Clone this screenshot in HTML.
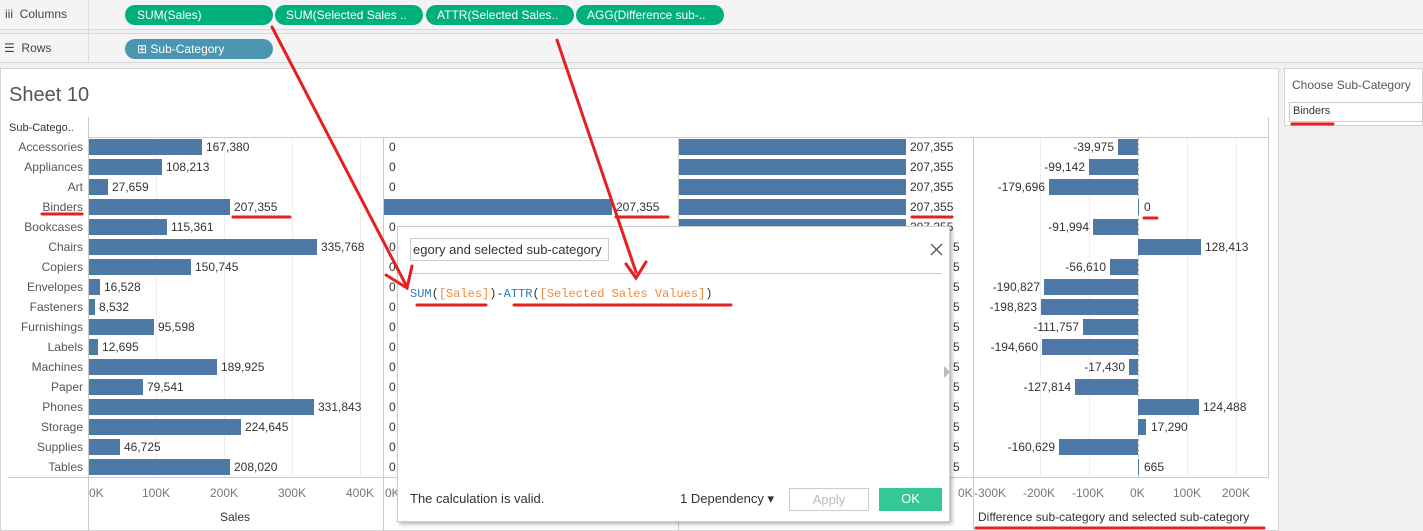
<!DOCTYPE html>
<html><head><meta charset="utf-8"><style>
*{margin:0;padding:0;box-sizing:border-box}
body{width:1423px;height:531px;overflow:hidden;background:#f0f0f0;font-family:"Liberation Sans",sans-serif;font-size:12px;color:#333;position:relative}
.a{position:absolute;white-space:nowrap}
.pill{position:absolute;height:20px;border-radius:10px;color:#fff;font-size:12px;line-height:20px;padding-left:12px;background:#00b07b}
.b{position:absolute;height:16px;background:#4e79a7}
.l{position:absolute;font-size:12px;color:#333;line-height:16px}
.r{position:absolute;font-size:12px;color:#555;line-height:16px;text-align:right;width:75px;left:8px}
.ax{position:absolute;font-size:12px;color:#777;top:486px}
.g{position:absolute;top:120px;height:358px;width:1px;background:#eee}
</style></head><body>
<div class="a" style="left:0;top:0;width:1423px;height:30px;background:#f4f4f4;border-bottom:1px solid #d8d8d8"></div>
<div class="a" style="left:0;top:33px;width:1423px;height:30px;background:#f4f4f4;border-top:1px solid #d8d8d8;border-bottom:1px solid #d8d8d8"></div>
<div class="a" style="left:88px;top:0;width:1px;height:63px;background:#ddd"></div>
<div class="a" style="left:5px;top:7px;font-size:12px;color:#444">iii&nbsp; Columns</div>
<div class="a" style="left:4px;top:41px;font-size:12px;color:#444">☰&nbsp; Rows</div>
<div class="pill" style="left:125px;top:5px;width:148px">SUM(Sales)</div>
<div class="pill" style="left:275px;top:5px;width:148px;padding-left:11px">SUM(Selected Sales ..</div>
<div class="pill" style="left:426px;top:5px;width:148px;padding-left:11px">ATTR(Selected Sales..</div>
<div class="pill" style="left:576px;top:5px;width:148px;padding-left:11px">AGG(Difference sub-..</div>
<div class="pill" style="left:125px;top:39px;width:148px;background:#4a96b0;padding-left:12px">⊞ Sub-Category</div>
<div class="a" style="left:0;top:68px;width:1279px;height:463px;background:#fff;border:1px solid #d4d4d4"></div>
<div class="a" style="left:9px;top:84px;font-size:20px;color:#555">Sheet 10</div>
<div class="a" style="left:1284px;top:68px;width:139px;height:58px;background:#fff;border:1px solid #d4d4d4"></div>
<div class="a" style="left:1292px;top:78px;font-size:12px;color:#555">Choose Sub-Category</div>
<div class="a" style="left:1289px;top:102px;width:134px;height:20px;border:1px solid #ccc;background:#fff"></div>
<div class="a" style="left:1293px;top:105px;font-size:11px;color:#333">Binders</div>
<div class="a" style="left:9px;top:122px;font-size:11px;color:#333">Sub-Catego..</div>
<div class="a" style="left:88px;top:117px;width:1px;height:414px;background:#ccc"></div>
<div class="a" style="left:88px;top:137px;width:1180px;height:1px;background:#ccc"></div>
<div class="a" style="left:8px;top:477px;width:1260px;height:1px;background:#ccc"></div>
<div class="a" style="left:383px;top:137px;width:1px;height:394px;background:#ccc"></div>
<div class="a" style="left:678px;top:137px;width:1px;height:394px;background:#ccc"></div>
<div class="a" style="left:973px;top:137px;width:1px;height:394px;background:#ccc"></div>
<div class="a" style="left:1268px;top:117px;width:1px;height:361px;background:#ccc"></div>
<div class="g" style="left:156px;top:138px;height:339px"></div><div class="g" style="left:224px;top:138px;height:339px"></div><div class="g" style="left:292px;top:138px;height:339px"></div><div class="g" style="left:360px;top:138px;height:339px"></div>
<div class="g" style="left:1040px;top:138px;height:339px"></div><div class="g" style="left:1089px;top:138px;height:339px"></div><div class="g" style="left:1187px;top:138px;height:339px"></div><div class="g" style="left:1236px;top:138px;height:339px"></div>
<div class="a" style="left:1138px;top:138px;height:339px;border-left:1px dashed #bbb"></div>
<div class="r" style="top:139px">Accessories</div><div class="r" style="top:159px">Appliances</div><div class="r" style="top:179px">Art</div><div class="r" style="top:199px">Binders</div><div class="r" style="top:219px">Bookcases</div><div class="r" style="top:239px">Chairs</div><div class="r" style="top:259px">Copiers</div><div class="r" style="top:279px">Envelopes</div><div class="r" style="top:299px">Fasteners</div><div class="r" style="top:319px">Furnishings</div><div class="r" style="top:339px">Labels</div><div class="r" style="top:359px">Machines</div><div class="r" style="top:379px">Paper</div><div class="r" style="top:399px">Phones</div><div class="r" style="top:419px">Storage</div><div class="r" style="top:439px">Supplies</div><div class="r" style="top:459px">Tables</div>
<div class="b" style="left:89px;top:139px;width:113px"></div><div class="l" style="left:206px;top:139px">167,380</div>
<div class="b" style="left:89px;top:159px;width:73px"></div><div class="l" style="left:166px;top:159px">108,213</div>
<div class="b" style="left:89px;top:179px;width:19px"></div><div class="l" style="left:112px;top:179px">27,659</div>
<div class="b" style="left:89px;top:199px;width:141px"></div><div class="l" style="left:234px;top:199px">207,355</div>
<div class="b" style="left:89px;top:219px;width:78px"></div><div class="l" style="left:171px;top:219px">115,361</div>
<div class="b" style="left:89px;top:239px;width:228px"></div><div class="l" style="left:321px;top:239px">335,768</div>
<div class="b" style="left:89px;top:259px;width:102px"></div><div class="l" style="left:195px;top:259px">150,745</div>
<div class="b" style="left:89px;top:279px;width:11px"></div><div class="l" style="left:104px;top:279px">16,528</div>
<div class="b" style="left:89px;top:299px;width:6px"></div><div class="l" style="left:99px;top:299px">8,532</div>
<div class="b" style="left:89px;top:319px;width:65px"></div><div class="l" style="left:158px;top:319px">95,598</div>
<div class="b" style="left:89px;top:339px;width:9px"></div><div class="l" style="left:102px;top:339px">12,695</div>
<div class="b" style="left:89px;top:359px;width:128px"></div><div class="l" style="left:221px;top:359px">189,925</div>
<div class="b" style="left:89px;top:379px;width:54px"></div><div class="l" style="left:147px;top:379px">79,541</div>
<div class="b" style="left:89px;top:399px;width:225px"></div><div class="l" style="left:318px;top:399px">331,843</div>
<div class="b" style="left:89px;top:419px;width:152px"></div><div class="l" style="left:245px;top:419px">224,645</div>
<div class="b" style="left:89px;top:439px;width:31px"></div><div class="l" style="left:124px;top:439px">46,725</div>
<div class="b" style="left:89px;top:459px;width:141px"></div><div class="l" style="left:234px;top:459px">208,020</div>
<div class="l" style="left:389px;top:139px">0</div><div class="l" style="left:389px;top:159px">0</div><div class="l" style="left:389px;top:179px">0</div>
<div class="b" style="left:384px;top:199px;width:228px"></div><div class="l" style="left:616px;top:199px">207,355</div>
<div class="l" style="left:389px;top:219px">0</div><div class="l" style="left:389px;top:239px">0</div><div class="l" style="left:389px;top:259px">0</div><div class="l" style="left:389px;top:279px">0</div><div class="l" style="left:389px;top:299px">0</div><div class="l" style="left:389px;top:319px">0</div><div class="l" style="left:389px;top:339px">0</div><div class="l" style="left:389px;top:359px">0</div><div class="l" style="left:389px;top:379px">0</div><div class="l" style="left:389px;top:399px">0</div><div class="l" style="left:389px;top:419px">0</div><div class="l" style="left:389px;top:439px">0</div><div class="l" style="left:389px;top:459px">0</div>
<div class="b" style="left:679px;top:139px;width:227px"></div><div class="l" style="left:910px;top:139px">207,355</div>
<div class="b" style="left:679px;top:159px;width:227px"></div><div class="l" style="left:910px;top:159px">207,355</div>
<div class="b" style="left:679px;top:179px;width:227px"></div><div class="l" style="left:910px;top:179px">207,355</div>
<div class="b" style="left:679px;top:199px;width:227px"></div><div class="l" style="left:910px;top:199px">207,355</div>
<div class="b" style="left:679px;top:219px;width:227px"></div><div class="l" style="left:910px;top:219px">207,355</div>
<div class="l" style="left:953px;top:239px">5</div><div class="l" style="left:953px;top:259px">5</div><div class="l" style="left:953px;top:279px">5</div><div class="l" style="left:953px;top:299px">5</div><div class="l" style="left:953px;top:319px">5</div><div class="l" style="left:953px;top:339px">5</div><div class="l" style="left:953px;top:359px">5</div><div class="l" style="left:953px;top:379px">5</div><div class="l" style="left:953px;top:399px">5</div><div class="l" style="left:953px;top:419px">5</div><div class="l" style="left:953px;top:439px">5</div><div class="l" style="left:953px;top:459px">5</div>
<div class="b" style="left:1118px;top:139px;width:20px"></div><div class="l" style="left:1040px;top:139px;width:74px;text-align:right">-39,975</div>
<div class="b" style="left:1089px;top:159px;width:49px"></div><div class="l" style="left:1011px;top:159px;width:74px;text-align:right">-99,142</div>
<div class="b" style="left:1049px;top:179px;width:89px"></div><div class="l" style="left:971px;top:179px;width:74px;text-align:right">-179,696</div>
<div class="b" style="left:1138px;top:199px;width:1px"></div><div class="l" style="left:1144px;top:199px">0</div>
<div class="b" style="left:1093px;top:219px;width:45px"></div><div class="l" style="left:1015px;top:219px;width:74px;text-align:right">-91,994</div>
<div class="b" style="left:1138px;top:239px;width:63px"></div><div class="l" style="left:1205px;top:239px">128,413</div>
<div class="b" style="left:1110px;top:259px;width:28px"></div><div class="l" style="left:1032px;top:259px;width:74px;text-align:right">-56,610</div>
<div class="b" style="left:1044px;top:279px;width:94px"></div><div class="l" style="left:966px;top:279px;width:74px;text-align:right">-190,827</div>
<div class="b" style="left:1041px;top:299px;width:97px"></div><div class="l" style="left:963px;top:299px;width:74px;text-align:right">-198,823</div>
<div class="b" style="left:1083px;top:319px;width:55px"></div><div class="l" style="left:1005px;top:319px;width:74px;text-align:right">-111,757</div>
<div class="b" style="left:1042px;top:339px;width:96px"></div><div class="l" style="left:964px;top:339px;width:74px;text-align:right">-194,660</div>
<div class="b" style="left:1129px;top:359px;width:9px"></div><div class="l" style="left:1051px;top:359px;width:74px;text-align:right">-17,430</div>
<div class="b" style="left:1075px;top:379px;width:63px"></div><div class="l" style="left:997px;top:379px;width:74px;text-align:right">-127,814</div>
<div class="b" style="left:1138px;top:399px;width:61px"></div><div class="l" style="left:1203px;top:399px">124,488</div>
<div class="b" style="left:1138px;top:419px;width:8px"></div><div class="l" style="left:1151px;top:419px">17,290</div>
<div class="b" style="left:1059px;top:439px;width:79px"></div><div class="l" style="left:981px;top:439px;width:74px;text-align:right">-160,629</div>
<div class="b" style="left:1138px;top:459px;width:1px"></div><div class="l" style="left:1144px;top:459px">665</div>
<div class="ax" style="left:89px">0K</div><div class="ax" style="left:142px">100K</div><div class="ax" style="left:210px">200K</div><div class="ax" style="left:278px">300K</div><div class="ax" style="left:346px">400K</div><div class="ax" style="left:385px">0K</div>
<div class="ax" style="left:958px">0K</div><div class="ax" style="left:974px">-300K</div><div class="ax" style="left:1023px">-200K</div><div class="ax" style="left:1072px">-100K</div><div class="ax" style="left:1130px">0K</div><div class="ax" style="left:1173px">100K</div><div class="ax" style="left:1222px">200K</div>
<div class="a" style="left:220px;top:510px;font-size:12px;color:#333">Sales</div>
<div class="a" style="left:978px;top:510px;font-size:12px;color:#333">Difference sub-category and selected sub-category</div>
<div class="a" style="left:397px;top:226px;width:553px;height:296px;background:#fff;border:1px solid #ccc;box-shadow:2px 2px 4px rgba(0,0,0,.3)"></div>
<div class="a" style="left:410px;top:238px;width:199px;height:23px;border:1px solid #ccc;font-size:13px;line-height:21px;padding-left:2px;overflow:hidden;color:#333">egory and selected sub-category</div>
<svg class="a" style="left:930px;top:243px" width="13" height="13" stroke="#555" stroke-width="1.3"><path d="M1 1 L12 12 M12 1 L1 12"/></svg>
<div class="a" style="left:410px;top:273px;width:532px;height:1px;background:#ccc"></div>
<div class="a" style="left:410px;top:287px;font-family:'Liberation Mono',monospace;font-size:12px;color:#333"><span style="color:#2e7fb8">SUM</span>(<span style="color:#f08a3a">[Sales]</span>)-<span style="color:#2e7fb8">ATTR</span>(<span style="color:#f08a3a">[Selected Sales Values]</span>)</div>
<div class="a" style="left:944px;top:366px;width:0;height:0;border-left:6px solid #bbb;border-top:6px solid transparent;border-bottom:6px solid transparent"></div>
<div class="a" style="left:410px;top:491px;font-size:13px;color:#333">The calculation is valid.</div>
<div class="a" style="left:680px;top:491px;font-size:13px;color:#333">1 Dependency ▾</div>
<div class="a" style="left:789px;top:488px;width:80px;height:23px;border:1px solid #ccc;color:#bbb;text-align:center;line-height:21px;font-size:13px">Apply</div>
<div class="a" style="left:879px;top:488px;width:63px;height:23px;background:#33c896;color:#fff;text-align:center;line-height:22px;font-size:13px">OK</div>
<svg class="a" style="left:0;top:0" width="1423" height="531" fill="none" stroke="#e52020" stroke-width="3" stroke-linecap="round">
<path d="M272 27 L407 287"/><path d="M386 275 L407 288 L412 266"/>
<path d="M557 40 L636 272"/><path d="M626 264 L636 278 L646 262"/>
<path d="M42 214 H82"/><path d="M233 217 H290"/><path d="M616 217 H668"/><path d="M912 217 H952"/><path d="M1144 218 H1157"/>
<path d="M1292 124 H1333"/>
<path d="M417 305 H486"/><path d="M514 305 H731"/>
<path d="M976 528 H1264"/>
</svg>
</body></html>
